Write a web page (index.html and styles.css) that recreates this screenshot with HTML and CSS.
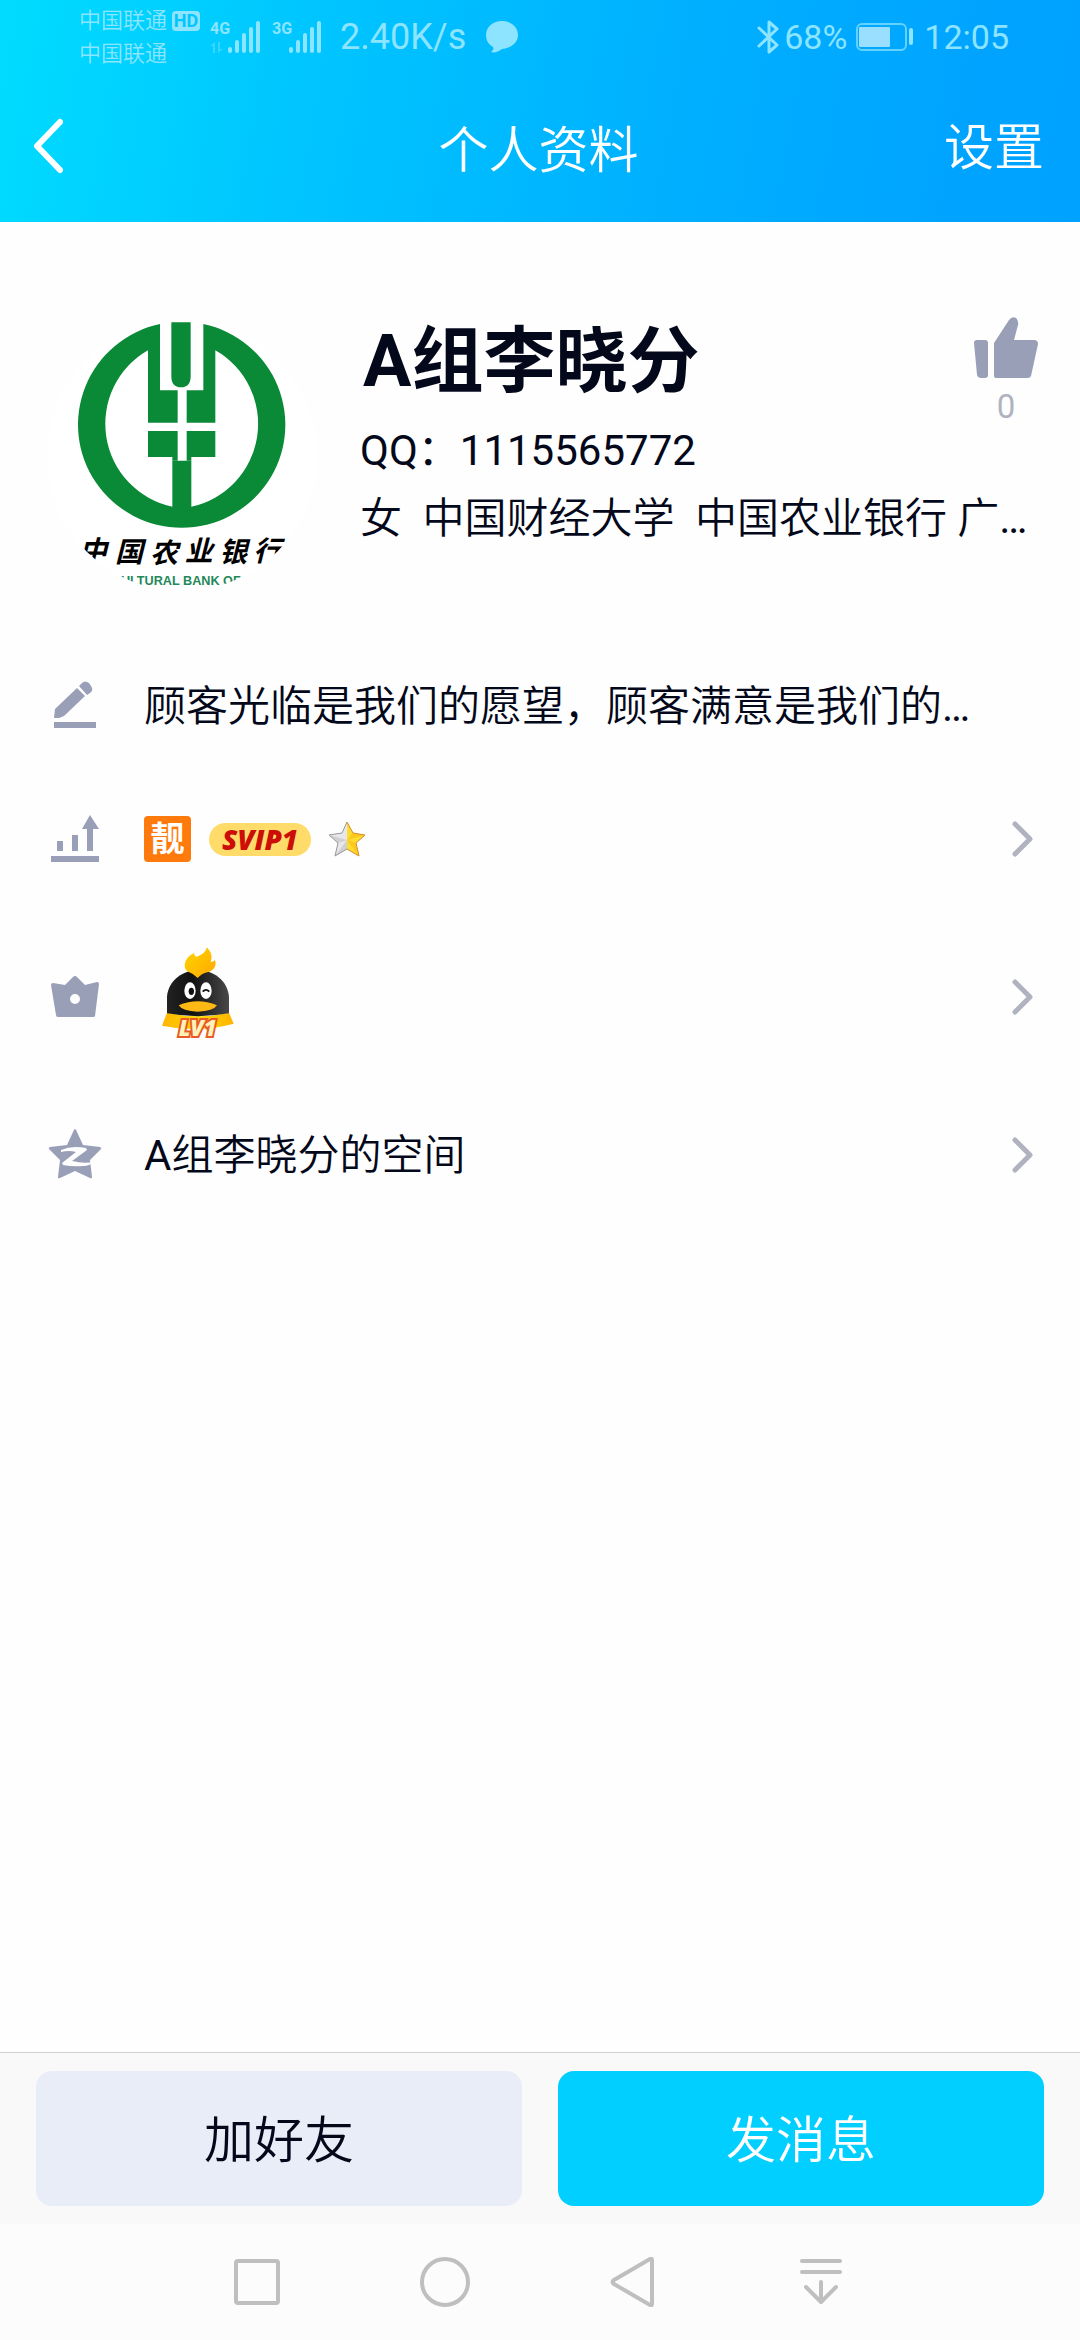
FILE: index.html
```html
<!DOCTYPE html>
<html lang="zh-CN">
<head>
<meta charset="utf-8">
<meta name="viewport" content="width=device-width">
<title>个人资料</title>
<link rel="stylesheet" href="styles.css">
</head>
<body>
<header class="top">
  <div class="status">
    <div class="carriers">
      <div class="carrier">中国联通<span class="hd">HD</span></div>
      <div class="carrier">中国联通</div>
    </div>
    <div class="signal">
      <span class="net">4G</span>
      <svg width="51" height="32" viewBox="0 0 51 32" fill="currentColor"><path opacity=".4" d="M0 25l5-4v11H3v-7zM8 21h2v7h3l-5 4z"/><rect x="18" y="26" width="4" height="6" rx="2"/><rect x="25" y="19" width="4" height="13" rx="2"/><rect x="32" y="12" width="4" height="20" rx="2"/><rect x="39" y="6" width="4" height="26" rx="2"/><rect x="46" y="0" width="4" height="32" rx="2"/></svg>
    </div>
    <div class="signal">
      <span class="net">3G</span>
      <svg width="51" height="32" viewBox="0 0 51 32" fill="currentColor"><rect x="17" y="26" width="4" height="6" rx="2"/><rect x="24" y="19" width="4" height="13" rx="2"/><rect x="31" y="12" width="4" height="20" rx="2"/><rect x="38" y="6" width="4" height="26" rx="2"/><rect x="45" y="0" width="4" height="32" rx="2"/></svg>
    </div>
    <span class="speed">2.40K/s</span>
    <svg class="bubble" width="32" height="32" viewBox="0 0 32 32" fill="currentColor"><path d="M16 0C25 0 32 6 32 14S25 27 16 28C12 31 9 32 5 31C7 29 8 28 7 26C2 23 0 19 0 14C0 6 7 0 16 0z"/></svg>
    <svg class="bluetooth" width="22" height="34" viewBox="0 0 22 34" fill="none" stroke="currentColor" stroke-width="3" stroke-linejoin="round" stroke-linecap="round"><path d="M2 8l18 17-8 7V2l8 7L2 26"/></svg>
    <span class="power">68%</span>
    <svg class="battery" width="58" height="28" viewBox="0 0 58 28" fill="none"><rect x="1" y="1" width="49" height="26" rx="5" stroke="currentColor" stroke-width="2" opacity=".7"/><rect x="3" y="4" width="31" height="20" rx="1" fill="#9adfff"/><rect x="53" y="5" width="4" height="17" rx="2" fill="currentColor"/></svg>
    <time class="clock">12:05</time>
  </div>
  <nav class="bar">
    <button class="back" type="button" aria-label="返回"><svg width="32" height="56" viewBox="0 0 32 56" fill="none" stroke="currentColor" stroke-width="6" stroke-linecap="round" stroke-linejoin="round"><path d="M27 4L4 28L27 52"/></svg></button>
    <h1 class="title">个人资料</h1>
    <button class="settings" type="button">设置</button>
  </nav>
</header>

<main class="main">
  <section class="profile">
    <svg class="avatar" viewBox="-39 63 810 810" role="img" aria-label="中国农业银行">
      <rect x="-39" y="63" width="810" height="810" fill="#fff"/>
      <path fill="#0a8a37" fill-rule="evenodd" d="M300 72V271H353V368H264V151A254 254 0 0 0 337 620V482H394V620A254 254 0 0 0 466 151V368H380V271H430V72A311 309 0 1 1 300 72z"/>
      <path fill="#0a8a37" d="M334 67H392V228Q392 262 363 262Q334 262 334 228z"/>
      <path fill="#0a8a37" d="M264 393H353V482H337V471H264zM380 393H466V471H394V482H380z"/>
      <text class="bank" x="57" y="784">中</text><text class="bank" x="165" y="787">国</text><text class="bank" x="270" y="790">农</text><text class="bank" x="374" y="784">业</text><text class="bank" x="478" y="787">银</text><text class="bank" x="580" y="784">行</text>
      <text class="bank-en" x="542" y="856" text-anchor="end">CULTURAL BANK OF</text>
    </svg>
    <h2 class="name">A组李晓分</h2>
    <button class="like" type="button" aria-label="赞 0">
      <svg width="64" height="62" viewBox="0 0 64 62" fill="currentColor"><path d="M3 23H11Q14 23 14 26V58Q14 61 11 61H7Q4 61 3 58L0 26Q0 23 3 23z"/><path d="M20 26L35 3Q38 -1 42 1Q45 4 44 8L40 23H60Q64 23 64 27L57 59Q56 61 54 61H22Q20 61 20 59z"/></svg>
      <span>0</span>
    </button>
    <p class="line qq">QQ：1115565772</p>
    <p class="line details">女&nbsp; 中国财经大学&nbsp; 中国农业银行 广<span class="latin">…</span></p>
  </section>

  <div class="row signature">
    <svg class="icon" viewBox="0 0 54 54" fill="currentColor"><path d="M6 39L7 30L29 9L37 17L16 37L11 39zM31 7L34 4Q37 1 41 4L43 7Q46 11 42 14L39 16z"/><rect x="6" y="43" width="42" height="6"/></svg>
    <p class="text">顾客光临是我们的愿望，顾客满意是我们的<span class="latin">…</span></p>
  </div>

  <a class="row" href="#level">
    <svg class="icon" viewBox="0 0 54 54" fill="currentColor"><path d="M3 44H51V50H3zM9 29H15V39H9zM24 23H30V39H24zM39 17H34L42 3L51 17H45V39H39z"/></svg>
    <span class="badges">
      <span class="pretty">靓</span>
      <span class="svip">SVIP1</span>
      <svg width="38" height="36" viewBox="0 0 38 36"><path d="M19 1L14 12L1 14L10 22L7 35L19 28z" fill="#d0d0d4"/><path d="M19 1L25 12L37 14L28 22L31 35L19 28z" fill="#fbc81e"/><path d="M19 1V19L1 14L14 12zM19 19L7 35L10 22z" fill="#e8e8ea"/><path d="M19 1V19L25 12zM19 19L37 14L28 22zM19 19V28L31 35z" fill="#ffdc30"/><path d="M19 1L14 12L1 14L10 22L7 35L19 28" fill="none" stroke="#999"/><path d="M19 1L25 12L37 14L28 22L31 35L19 28" fill="none" stroke="#d88a28"/></svg>
    </span>
    <svg class="chevron" viewBox="0 0 22 36"><path d="M3 3L18 18L3 33"/></svg>
  </a>

  <a class="row" href="#vip">
    <svg class="icon" viewBox="0 0 54 54" fill="currentColor"><path fill-rule="evenodd" d="M3 15Q3 13 5 13L17 15L25 7Q27 5 29 7L37 15L49 12Q51 12 51 14L47 46Q47 47 45 47H10Q8 47 8 45zM27 24A5 5 0 1 0 27 34A5 5 0 1 0 27 24z"/></svg>
    <svg class="penguin" viewBox="390 75 228 288">
      <defs>
        <linearGradient id="scarf"><stop offset="0" stop-color="#ffb400"/><stop offset=".5" stop-color="#ffd800"/><stop offset="1" stop-color="#ffb400"/></linearGradient>
        <linearGradient id="head"><stop offset="0" stop-color="#222"/><stop offset=".4" stop-color="#111"/><stop offset="1" stop-color="#484848"/></linearGradient>
        <linearGradient id="flame" x1="0" x2="1" y1="0" y2="1"><stop offset="0" stop-color="#ffd500"/><stop offset="1" stop-color="#ffa800"/></linearGradient>
      </defs>
      <path fill="url(#scarf)" d="M411 278Q503 300 597 278L611 311Q505 340 396 317z"/>
      <path fill="url(#head)" d="M411 280V230C415 180 460 151 503 151C550 151 592 180 597 230V280Q503 297 411 280z"/>
      <path fill="url(#flame)" d="M503 174Q488 160 472 154C457 142 463 111 493 99Q492 109 500 110C516 105 528 96 530 82C544 97 548 108 542 126Q550 126 555 120C562 141 547 154 532 157Q515 161 503 174z"/>
      <ellipse cx="480" cy="212" rx="17" ry="25" fill="#fff"/><ellipse cx="528" cy="212" rx="17" ry="25" fill="#fff"/>
      <ellipse cx="484" cy="214" rx="8" ry="11" fill="#111"/><path d="M518 215Q528 204 538 215" fill="none" stroke="#111" stroke-width="5"/>
      <path fill="#fdb913" d="M446 256Q503 231 561 256Q550 274 503 275Q457 274 446 256z"/>
      <text class="lv" x="446" y="349">LV1</text>
    </svg>
    <svg class="chevron" viewBox="0 0 22 36"><path d="M3 3L18 18L3 33"/></svg>
  </a>

  <a class="row" href="#qzone">
    <svg class="icon" viewBox="0 0 54 54"><path fill="currentColor" d="M27 1Q28 1 29 4L35 17L52 19Q54 20 53 21L42 32L44 49Q44 51 42 50L27 43L12 50Q10 51 10 49L12 32L1 21Q0 20 2 19L19 17L25 4Q26 1 27 1z"/><path fill="#fff" d="M13 22Q24 17 38 20L39 22L24 33Q36 36 45 34Q42 38 35 38Q25 39 15 37L14 35L28 24Q21 22 13 24z"/></svg>
    <span class="text"><span class="latin">A</span>组李晓分的空间</span>
    <svg class="chevron" viewBox="0 0 22 36"><path d="M3 3L18 18L3 33"/></svg>
  </a>
</main>

<footer>
  <div class="actions">
    <button class="action" type="button">加好友</button>
    <button class="action primary" type="button">发消息</button>
  </div>
  <div class="system">
    <button type="button" aria-label="最近任务"><svg width="50" height="50" viewBox="0 0 50 50"><rect x="4" y="4" width="42" height="42" rx="2"/></svg></button>
    <button type="button" aria-label="主页"><svg width="50" height="50" viewBox="0 0 50 50"><circle cx="25" cy="25" r="23"/></svg></button>
    <button type="button" aria-label="后退"><svg width="50" height="50" viewBox="0 0 50 50"><path d="M44 3V47Q44 49 42 48L6 27Q3 25 6 23L42 2Q44 1 44 3z"/></svg></button>
    <button type="button" aria-label="通知栏"><svg width="50" height="50" viewBox="0 0 50 50"><path d="M6 4H44M6 15H44M25 25V45M10 30L25 45L40 30" stroke-linecap="round" stroke-linejoin="round"/></svg></button>
  </div>
</footer>
</body>
</html>
```

FILE: styles.css
```css
* {
  box-sizing: border-box;
}

body {
  margin: 0;
  min-height: 100vh;
  display: flex;
  flex-direction: column;
  background: #fefefe;
  color: #03081a;
  font-family: Roboto, "Noto Sans CJK SC", sans-serif;
  font-size: 42px;
  font-weight: 400;
}

h1, h2, p {
  margin: 0;
}

button {
  padding: 0;
  border: 0;
  background: none;
  color: inherit;
  font: inherit;
}

svg {
  display: block;
  flex: none;
}

.top {
  height: 222px;
  background: linear-gradient(100deg, #00dcff 0%, #00c4ff 30%, #00b0ff 62%, #00a4ff 88%, #00a2ff 100%);
  color: #fff;
}

.status {
  display: flex;
  align-items: center;
  height: 74px;
  padding: 0 71px 0 79px;
  color: #8ce4ff;
  font-size: 34px;
}

.carriers {
  width: 131px;
  font-size: 22px;
  line-height: 33px;
}

.carrier {
  display: flex;
  align-items: center;
  gap: 5px;
  font-weight: 350;
}

.hd {
  width: 28px;
  border-radius: 4px;
  background: #8ce4ff;
  color: #00c6ff;
  font-size: 18px;
  font-weight: 700;
  line-height: 20px;
  text-align: center;
}

.signal {
  display: grid;
  width: 62px;
}

.signal > * {
  grid-area: 1 / 1;
}

.net {
  font-size: 16px;
  font-weight: 700;
  line-height: 16px;
}

.speed {
  width: 137px;
  margin-left: 6px;
  font-size: 36px;
}

.bubble {
  margin-left: 9px;
}

.bluetooth {
  margin-left: auto;
}

.power {
  margin-left: 5px;
}

.battery {
  margin: 0 10px 0 9px;
}

.bar {
  display: grid;
  grid-template-columns: 1fr auto 1fr;
  align-items: center;
  height: 148px;
  padding: 0 36px 4px 33px;
  font-size: 50px;
}

.back {
  justify-self: start;
}

.title {
  font-size: 50px;
  font-weight: 350;
}

.settings {
  justify-self: end;
  padding-bottom: 6px;
  font-weight: 350;
}

.main {
  flex: 1;
}

.profile {
  display: grid;
  grid-template-columns: 270px 1fr auto;
  grid-template-rows: 100px 68px 68px;
  column-gap: 43px;
  height: 430px;
  padding: 95px 42px 0 47px;
}

.avatar {
  grid-row: 1 / 4;
  width: 270px;
  height: 270px;
  margin-top: 4px;
  border-radius: 50%;
}

.bank {
  font-family: "Noto Sans CJK SC", sans-serif;
  font-size: 84px;
  font-style: italic;
  font-weight: 700;
}

.bank-en {
  fill: #23885a;
  font-family: "Liberation Sans", sans-serif;
  font-size: 38px;
  font-weight: 700;
}

.name {
  padding-left: 3px;
  font-size: 72px;
  font-weight: 700;
  line-height: 90px;
}

.like {
  grid-column: 3;
  grid-row: 1 / 3;
  align-self: start;
  color: #989fb6;
}

.like span {
  display: block;
  margin-top: 8px;
  color: #b0b3bf;
  font-size: 33px;
  line-height: 40px;
}

.line {
  grid-column: 2 / 4;
  line-height: 68px;
  white-space: nowrap;
}

.qq {
  grid-column: 2;
}

.details,
.text {
  font-weight: 350;
}

.latin {
  font-weight: 400;
}

.row {
  display: flex;
  align-items: center;
  height: 158px;
  padding: 0 46px 0 48px;
  color: inherit;
  text-decoration: none;
}

.signature {
  height: 108px;
}

.icon {
  width: 54px;
  height: 54px;
  margin-right: 42px;
  color: #989fb6;
}

.text {
  padding-top: 2px;
  line-height: 60px;
  white-space: nowrap;
}

.badges {
  display: flex;
  align-items: center;
}

.pretty {
  width: 47px;
  border-radius: 4px;
  background: #ff7a0c;
  color: #fff;
  font-size: 34px;
  font-weight: 700;
  line-height: 46px;
  text-align: center;
}

.svip {
  width: 102px;
  margin: 0 17px 0 18px;
  border-radius: 17px;
  background: #ffdc69;
  color: #cc0d08;
  font-family: "Open Sans", sans-serif;
  font-size: 28px;
  font-style: italic;
  font-weight: 800;
  line-height: 33px;
  text-align: center;
}

.penguin {
  width: 76px;
  height: 96px;
  margin: 0 0 8px 16px;
}

.lv {
  fill: #fff2b8;
  stroke: #e85a28;
  stroke-width: 12px;
  paint-order: stroke;
  font-family: "Open Sans", sans-serif;
  font-size: 66px;
  font-style: italic;
  font-weight: 800;
}

.chevron {
  width: 22px;
  height: 36px;
  margin-left: auto;
  fill: none;
  stroke: #b0b3bf;
  stroke-width: 5px;
  stroke-linecap: round;
  stroke-linejoin: round;
}

.actions {
  display: grid;
  grid-template-columns: 1fr 1fr;
  gap: 36px;
  padding: 18px 36px;
  border-top: 1px solid #d0d0d0;
  background: #f9f9f9;
}

.action {
  height: 135px;
  padding-bottom: 6px;
  border-radius: 16px;
  background: #e9edf7;
  font-size: 50px;
  font-weight: 350;
}

.primary {
  background: #00cfff;
  color: #fff;
}

.system {
  display: flex;
  justify-content: center;
  align-items: center;
  gap: 138px;
  height: 116px;
  padding-right: 3px;
  background: #fcfcfc;
}

.system svg {
  fill: none;
  stroke: #bfbfbf;
  stroke-width: 4px;
}
```
